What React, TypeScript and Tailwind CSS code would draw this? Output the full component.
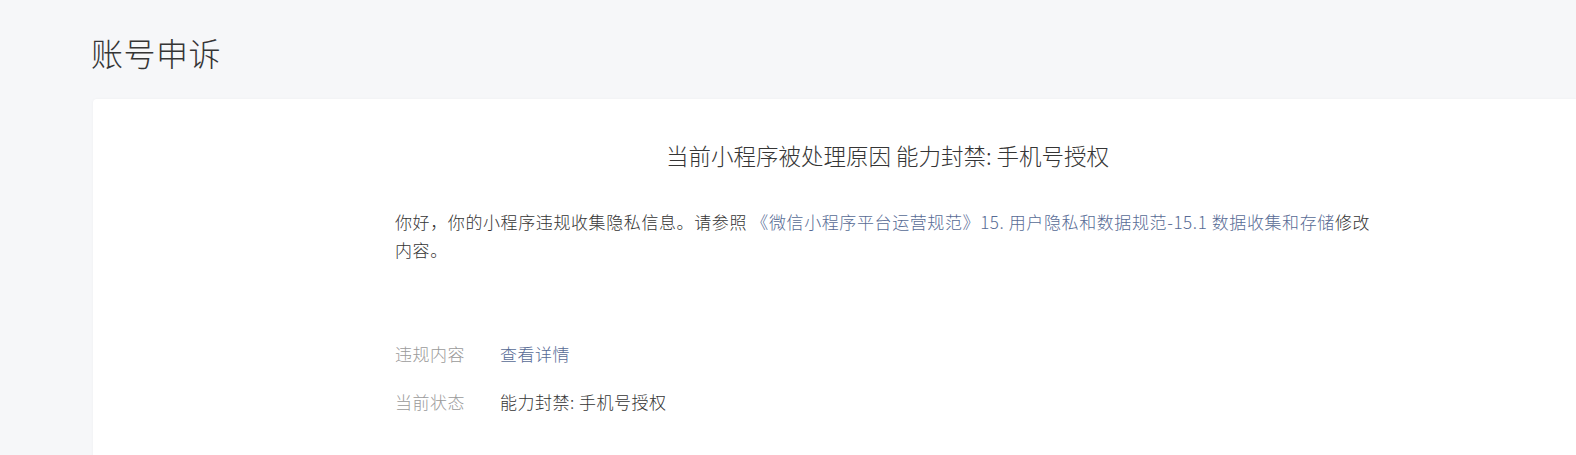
import React from "react";

export default function App() {
  const font = { fontFamily: '"Microsoft YaHei", "Noto Sans CJK SC", "Noto Sans", sans-serif' };
  return (
    <div className="min-h-screen w-full overflow-hidden bg-[#f6f7f9] text-[#353535] font-light" style={font}>
      <h1 className="pl-[91px] pt-[28px] text-[32px] leading-[48px] font-light tracking-[0.5px] text-[#353535]">账号申诉</h1>
      <div className="ml-[93px] mt-[23px] min-h-[400px] rounded-tl-[4px] bg-white pt-[40px] shadow-[0_0_3px_rgba(0,0,0,0.04)]">
        <div className="ml-[302px] w-[985px]">
          <h2 className="text-center text-[22.5px] leading-[32px] font-light text-[#353535]">
            当前小程序被处理原因 能力封禁: 手机号授权
          </h2>
          <p className="mt-[37px] text-[17px] leading-[28px] tracking-[0.6px] text-[#353535]">
            你好，你的小程序违规收集隐私信息。请参照{" "}
            <a className="text-[#576b95]">《微信小程序平台运营规范》15. 用户隐私和数据规范-15.1 数据收集和存储</a>
            修改内容。
          </p>
          <div className="mt-[76px] flex flex-col gap-[20px] text-[17px] leading-[28px] tracking-[0.5px]">
            <div className="flex">
              <span className="w-[105px] text-[#9a9a9a]">违规内容</span>
              <a className="text-[#576b95]">查看详情</a>
            </div>
            <div className="flex">
              <span className="w-[105px] text-[#9a9a9a]">当前状态</span>
              <span className="text-[#353535]">能力封禁: 手机号授权</span>
            </div>
          </div>
        </div>
      </div>
    </div>
  );
}
